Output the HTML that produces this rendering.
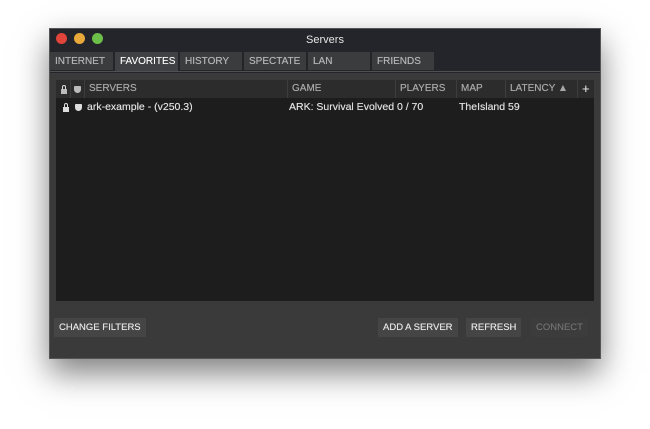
<!DOCTYPE html>
<html><head><style>
body{margin:0;width:650px;height:429px;background:#fff;position:relative;overflow:hidden;font-family:"Liberation Sans",Arial,sans-serif;font-size:10px;}
.win{position:absolute;left:49px;top:28px;width:552px;height:331px;background:#3a3a3a;box-shadow:0 14px 30px rgba(0,0,0,.5);border:1px solid #555;box-sizing:border-box}
.title{position:absolute;left:0;top:0;width:100%;height:44px;background:#23252a}
.title span{position:absolute;left:0;right:0;top:5px;text-align:center;color:#e6e6e6;font-size:11px}
.dot{position:absolute;top:4px;width:11px;height:11px;border-radius:50%}
.tab{position:absolute;top:23px;height:18px;background:#3a3c3e;color:#b4b4b4;line-height:19px;padding-left:5px;box-sizing:border-box;text-shadow:0 0 .4px #b4b4b4}
.tab.a{background:#3f4144;color:#fff;height:20px}
.line{position:absolute;left:0;top:42px;width:100%;height:1px;background:#505050}
.table{position:absolute;left:6px;top:51px;width:538px;height:221px;background:#1d1d1d}
.hdr{position:absolute;left:0;top:0;width:100%;height:18px;background:#2c2c2c}
.h{position:absolute;top:0;height:18px;line-height:18px;color:#a8a8a8;border-left:1px solid #3d3d3d;padding-left:4px;box-sizing:border-box;text-shadow:0 0 .4px #a8a8a8}
.row{position:absolute;top:20px;color:#e0e0e0;font-size:10.5px;line-height:14px;text-shadow:0 0 .4px #e0e0e0}
.btn{position:absolute;top:289px;height:19px;line-height:19px;background:#454545;color:#e6e6e6;padding:0 5px;font-size:9.5px;text-shadow:0 0 .4px #e6e6e6}
.lock{position:absolute;width:6px;height:5px;background:#ddd}
.lock:before{content:"";position:absolute;left:1px;top:-4px;width:2px;height:3px;border:1px solid #ddd;border-bottom:0;border-radius:2px 2px 0 0}
.shield{position:absolute;width:7px;height:7px;background:#ddd;border-radius:1px 1px 4px 4px}
</style></head><body>
<div class="win">
<div class="title"><span>Servers</span>
<div class="dot" style="left:6px;background:#e0443a"></div>
<div class="dot" style="left:24px;background:#e8a83a"></div>
<div class="dot" style="left:42px;background:#6cc04a"></div>
</div>
<div class="tab" style="left:0;width:63px">INTERNET</div>
<div class="tab a" style="left:65px;width:63px">FAVORITES</div>
<div class="tab" style="left:130px;width:62px">HISTORY</div>
<div class="tab" style="left:194px;width:62px">SPECTATE</div>
<div class="tab" style="left:258px;width:62px">LAN</div>
<div class="tab" style="left:322px;width:62px">FRIENDS</div>
<div class="line"></div>
<div class="table">
<div class="hdr">
<div class="lock" style="left:5px;top:9px;background:#bbb"></div>
<div class="h" style="left:14px;width:14px"></div>
<div class="shield" style="left:18px;top:6px;background:#bbb"></div>
<div class="h" style="left:28px;width:204px">SERVERS</div>
<div class="h" style="left:231px;width:108px">GAME</div>
<div class="h" style="left:339px;width:61px">PLAYERS</div>
<div class="h" style="left:400px;width:49px">MAP</div>
<div class="h" style="left:449px;width:72px">LATENCY &#9650;</div>
<div class="h" style="left:521px;width:17px;color:#ddd;font-size:13px">+</div>
</div>
<div class="lock" style="left:7px;top:27px"></div>
<div class="shield" style="left:19px;top:24px"></div>
<div class="row" style="left:31px">ark-example - (v250.3)</div>
<div class="row" style="left:233px">ARK: Survival Evolved 0 / 70</div>
<div class="row" style="left:403px">TheIsland 59</div>
</div>
<div class="btn" style="left:4px">CHANGE FILTERS</div>
<div class="btn" style="left:328px">ADD A SERVER</div>
<div class="btn" style="left:416px">REFRESH</div>
<div class="btn" style="left:481px;color:#7a7a7a;background:#3c3c3c;text-shadow:none">CONNECT</div>
</div>
</body></html>
